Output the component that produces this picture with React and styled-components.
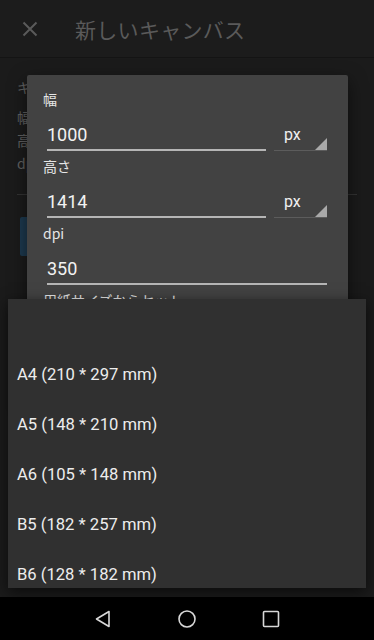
import React from "react";
import styled, { createGlobalStyle } from "styled-components";

const GlobalStyle = createGlobalStyle`
	html, body {
		margin: 0;
		padding: 0;
		background: #1b1b1b;
	}
	body {
		font-family: Roboto, "Noto Sans CJK JP", sans-serif;
	}
`

const Frame = styled.div`
	width: 374px;
	height: 640px;
	display: flex;
	flex-direction: column;
	overflow: hidden;
`

const Screen = styled.div`
	position: relative;
	flex: 1;
	background: #1b1b1b;
	overflow: hidden;
`

/* page underneath the dialog, dimmed by the scrim */
const AppBar = styled.header`
	height: 57px;
	display: flex;
	align-items: center;
	gap: 37px;
	padding: 0 22px;
	background: #1c1c1c;
	border-bottom: 1px solid #141414;
`

const Title = styled.h1`
	margin: 0;
	font-family: "Noto Sans CJK JP", sans-serif;
	font-size: 21px;
	font-weight: 400;
	color: #5a5a5a;
	letter-spacing: 0.3px;
`

const PageBody = styled.div`
	padding: 18px 17px;
	display: flex;
	flex-direction: column;
`

const PageLine = styled.div`
	font-family: "Noto Sans CJK JP", sans-serif;
	font-size: 14px;
	line-height: 23px;
	color: #626262;
	margin-bottom: ${p => p.heading ? "7px" : "0"};
`

const PageDivider = styled.div`
	height: 1px;
	background: #333;
	margin: 19px 0 22px;
`

const PageButton = styled.div`
	height: 39px;
	margin-left: 3px;
	border-radius: 2px;
	background: #1d3a50;
	width: 200px;
`

/* dialog */
const Dialog = styled.div`
	position: absolute;
	left: 27px;
	top: 75px;
	width: 321px;
	height: 330px;
	background: #424242;
	border-radius: 2px;
	box-shadow: 0 6px 18px rgba(0, 0, 0, 0.55);
	padding: 14px 21px 0 16px;
	box-sizing: border-box;
	display: flex;
	flex-direction: column;
`

const Label = styled.div`
	font-family: "Noto Sans CJK JP", sans-serif;
	font-size: 14px;
	line-height: 20px;
	color: #e6e6e6;
`

const FieldRow = styled.div`
	display: flex;
	align-items: flex-end;
	gap: 8px;
	margin: 6px 0 5px 4px;
`

const Input = styled.div`
	flex: 1;
	height: 36px;
	display: flex;
	align-items: center;
	font-size: 18px;
	color: #f2f2f2;
	border-bottom: 2px solid #b5b5b5;
	box-sizing: border-box;
	padding-top: 5px;
`

const Spinner = styled.div`
	position: relative;
	width: 53px;
	height: 36px;
	box-sizing: border-box;
	border-bottom: 1px solid #5c5c5c;
	padding: 10px 0 0 10px;
	font-size: 16px;
	color: #f0f0f0;
	&:after {
		content: "";
		position: absolute;
		right: 0;
		bottom: 0;
		width: 0;
		height: 0;
		border-style: solid;
		border-width: 0 0 12px 12px;
		border-color: transparent transparent #a9a9a9 transparent;
	}
`

/* open spinner list */
const Menu = styled.ul`
	position: absolute;
	left: 8px;
	top: 299px;
	width: 358px;
	height: 289px;
	margin: 0;
	padding: 0;
	list-style: none;
	background: #303030;
	box-shadow: 0 4px 14px rgba(0, 0, 0, 0.6);
	overflow: hidden;
`

const MenuItem = styled.li`
	height: 50px;
	display: flex;
	align-items: center;
	padding: 0 9px;
	font-size: 16.6px;
	color: #ededed;
`

const NavBar = styled.nav`
	height: 43px;
	flex-shrink: 0;
	background: #000;
	display: flex;
	align-items: center;
	justify-content: center;
	gap: 60px;
`

const NavButton = styled.div`
	width: 24px;
	height: 24px;
	display: grid;
	place-items: center;
`

const CloseIcon = () => (
	<svg width="16" height="16" viewBox="0 0 16 16">
		<path d="M1.5 1.5 L14.5 14.5 M14.5 1.5 L1.5 14.5" stroke="#5a5a5a" strokeWidth="2" />
	</svg>
)

const sizes = [
	"",
	"A4 (210 * 297 mm)",
	"A5 (148 * 210 mm)",
	"A6 (105 * 148 mm)",
	"B5 (182 * 257 mm)",
	"B6 (128 * 182 mm)",
]

const App = () => {
	return (
		<>
			<GlobalStyle />
			<Frame>
				<Screen>
					<AppBar>
						<CloseIcon />
						<Title>新しいキャンバス</Title>
					</AppBar>
					<PageBody>
						<PageLine heading>キャンバスサイズ</PageLine>
						<PageLine>幅 1000px</PageLine>
						<PageLine>高さ 1414px</PageLine>
						<PageLine>dpi 350</PageLine>
						<PageDivider />
						<PageButton />
					</PageBody>

					<Dialog>
						<Label>幅</Label>
						<FieldRow>
							<Input>1000</Input>
							<Spinner>px</Spinner>
						</FieldRow>
						<Label>高さ</Label>
						<FieldRow>
							<Input>1414</Input>
							<Spinner>px</Spinner>
						</FieldRow>
						<Label>dpi</Label>
						<FieldRow>
							<Input>350</Input>
						</FieldRow>
						<Label>用紙サイズからセット</Label>
					</Dialog>

					<Menu>
						{sizes.map((s, i) => (
							<MenuItem key={i}>{s}</MenuItem>
						))}
					</Menu>
				</Screen>
				<NavBar>
					<NavButton>
						<svg width="18" height="18" viewBox="0 0 18 18">
							<path d="M15 1.5 L15 16.5 L2.5 9 Z" fill="none" stroke="#d8d8d8" strokeWidth="1.6" strokeLinejoin="round" />
						</svg>
					</NavButton>
					<NavButton>
						<svg width="20" height="20" viewBox="0 0 20 20">
							<circle cx="10" cy="10" r="8" fill="none" stroke="#d8d8d8" strokeWidth="1.6" />
						</svg>
					</NavButton>
					<NavButton>
						<svg width="18" height="18" viewBox="0 0 18 18">
							<rect x="1.5" y="1.5" width="15" height="15" rx="1" fill="none" stroke="#d8d8d8" strokeWidth="1.6" />
						</svg>
					</NavButton>
				</NavBar>
			</Frame>
		</>
	)
}

export default App
